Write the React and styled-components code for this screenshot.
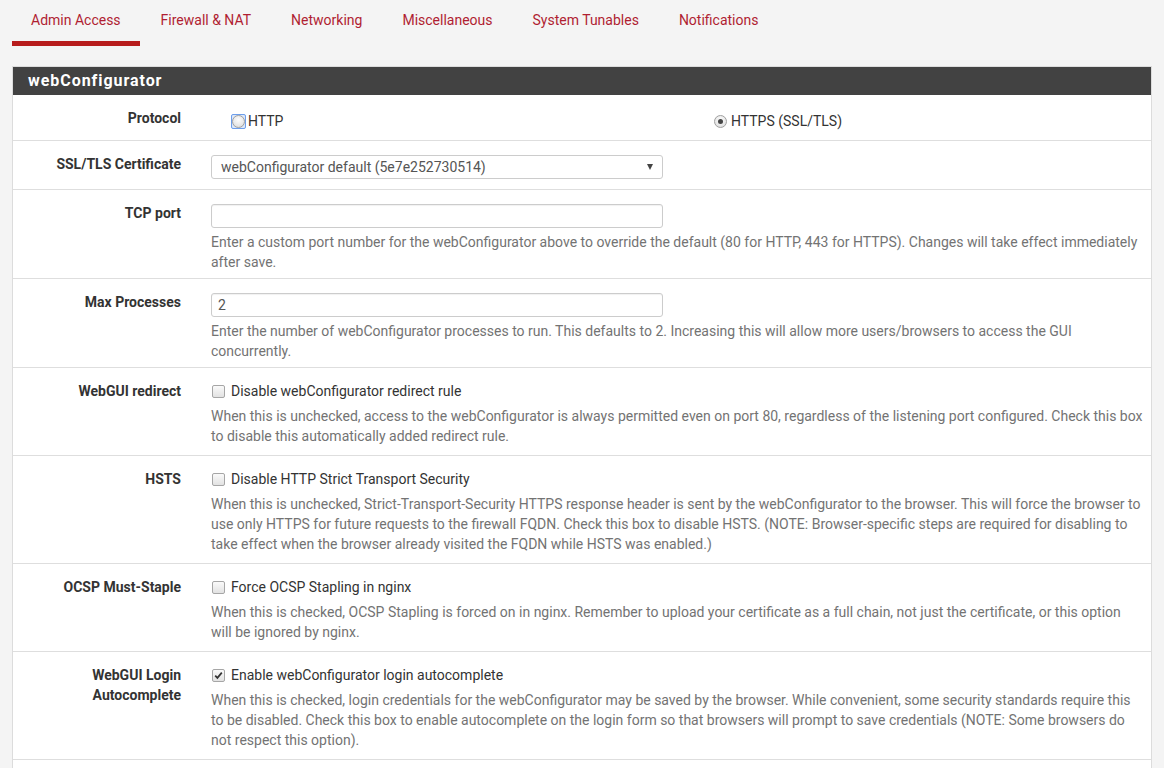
import React from "react";
import styled, { createGlobalStyle } from "styled-components";

const Global = createGlobalStyle`
  html, body { margin: 0; padding: 0; overflow: hidden; }
  body {
    background: #f4f4f4;
    font-family: Roboto, "Liberation Sans", Arial, sans-serif;
    font-size: 14px;
    color: #333;
  }
`;

const Page = styled.div`
  width: 1164px;
`;

const Tabs = styled.nav`
  display: flex;
  padding-left: 12px;
`;

const Tab = styled.a`
  display: block;
  padding: 10px 19px 11px 19px;
  line-height: 20px;
  font-size: 14px;
  color: #b01e32;
  text-decoration: none;
  border-bottom: 5px solid ${(p) => (p.$active ? "#b71c1c" : "transparent")};
  margin-right: 2px;
`;

const Panel = styled.section`
  margin: 20px 12px 0 12px;
  padding-bottom: 40px;
  background: #fff;
  border: 1px solid #dcdcdc;
`;

const PanelHeading = styled.h2`
  margin: 0;
  background: #424242;
  color: #fff;
  font-size: 16px;
  font-weight: 700;
  letter-spacing: 0.95px;
  line-height: 28px;
  padding: 0 15px;
`;

const Row = styled.div`
  display: grid;
  grid-template-columns: 183px 1fr;
  padding: 13px 0 ${(p) => p.$pb ?? 9}px 0;
  border-bottom: 1px solid #dedede;
`;

const Label = styled.div`
  padding: 0 15px;
  text-align: right;
  font-weight: 700;
  line-height: 20px;
  color: #333;
`;

const Content = styled.div`
  padding: 0 8px 0 15px;
  min-width: 0;
`;

const Help = styled.div`
  margin-top: ${(p) => p.$mt ?? 5}px;
  line-height: 20px;
  color: #737373;
`;

const Field = styled.div`
  box-sizing: border-box;
  width: 452px;
  height: 24px;
  margin-top: 1px;
  border: 1px solid #cccccc;
  border-radius: 3px;
  background: #fff;
  box-shadow: inset 0 1px 1px rgba(0, 0, 0, 0.06);
  padding: 0 9px 0 6px;
  line-height: 22px;
  color: #555;
  display: flex;
  align-items: center;
`;

const SelectBox = styled(Field)`
  padding-left: 9px;
  justify-content: space-between;
  box-shadow: none;
`;

const Caret = styled.span`
  width: 0;
  height: 0;
  border-left: 3.5px solid transparent;
  border-right: 3.5px solid transparent;
  border-top: 6px solid #444;
`;

const RadioGroup = styled.div`
  display: grid;
  grid-template-columns: 482px 1fr;
  margin: 3px 0 0 20px;
`;

const Choice = styled.label`
  display: flex;
  align-items: center;
  line-height: 20px;
  color: #333;
`;

const RadioWrap = styled.span`
  box-sizing: border-box;
  width: 15px;
  height: 15px;
  display: inline-flex;
  align-items: center;
  justify-content: center;
  border: 1px solid ${(p) => (p.$focus ? "#6d9eeb" : "transparent")};
  border-radius: 2px;
  margin-right: ${(p) => (p.$focus ? 2 : 3)}px;
  background: ${(p) => (p.$focus ? "#dce8fb" : "transparent")};
`;

const RadioDot = styled.span`
  box-sizing: border-box;
  width: 13px;
  height: 13px;
  border-radius: 50%;
  border: 1px solid #a0a0a0;
  background: radial-gradient(circle at 50% 35%, #fdfdfd 0%, #e4e4e4 70%, #d2d2d2 100%);
  display: inline-flex;
  align-items: center;
  justify-content: center;
  &::after {
    content: "";
    width: 5px;
    height: 5px;
    border-radius: 50%;
    background: ${(p) => (p.$checked ? "#444" : "transparent")};
  }
`;

const CheckLine = styled.label`
  display: flex;
  align-items: center;
  line-height: 20px;
  color: #333;
`;

const Box = styled.span`
  box-sizing: border-box;
  width: 13px;
  height: 13px;
  margin: 0 6px 0 1px;
  border: 1px solid #a6a6a6;
  border-radius: 2px;
  background: linear-gradient(#fafafa, #e2e2e2);
  display: inline-flex;
  align-items: center;
  justify-content: center;
`;

function Check({ checked }) {
  return (
    <Box>
      {checked && (
        <svg width="9" height="9" viewBox="0 0 9 9">
          <path d="M1.2 4.6 L3.4 6.9 L7.8 1.6" fill="none" stroke="#333" strokeWidth="1.7" />
        </svg>
      )}
    </Box>
  );
}

const tabs = [
  "Admin Access",
  "Firewall & NAT",
  "Networking",
  "Miscellaneous",
  "System Tunables",
  "Notifications",
];

export default function App() {
  return (
    <Page>
      <Global />
      <Tabs>
        {tabs.map((t, i) => (
          <Tab key={t} $active={i === 0} href="#">
            {t}
          </Tab>
        ))}
      </Tabs>
      <Panel>
        <PanelHeading>webConfigurator</PanelHeading>

        <Row $pb={9}>
          <Label>Protocol</Label>
          <Content>
            <RadioGroup>
              <Choice>
                <RadioWrap $focus>
                  <RadioDot />
                </RadioWrap>
                HTTP
              </Choice>
              <Choice>
                <RadioWrap>
                  <RadioDot $checked />
                </RadioWrap>
                HTTPS (SSL/TLS)
              </Choice>
            </RadioGroup>
          </Content>
        </Row>

        <Row $pb={10}>
          <Label>SSL/TLS Certificate</Label>
          <Content>
            <SelectBox>
              <span>webConfigurator default (5e7e252730514)</span>
              <Caret />
            </SelectBox>
          </Content>
        </Row>

        <Row $pb={6}>
          <Label>TCP port</Label>
          <Content>
            <Field />
            <Help $mt={4}>
              Enter a custom port number for the webConfigurator above to override the default (80 for
              HTTP, 443 for HTTPS). Changes will take effect immediately after save.
            </Help>
          </Content>
        </Row>

        <Row $pb={6}>
          <Label>Max Processes</Label>
          <Content>
            <Field>2</Field>
            <Help $mt={4}>
              Enter the number of webConfigurator processes to run. This defaults to 2. Increasing this
              will allow more users/browsers to access the GUI concurrently.
            </Help>
          </Content>
        </Row>

        <Row>
          <Label>WebGUI redirect</Label>
          <Content>
            <CheckLine>
              <Check />
              Disable webConfigurator redirect rule
            </CheckLine>
            <Help>
              When this is unchecked, access to the webConfigurator is always permitted even on port 80,
              regardless of the listening port configured. Check this box to disable this automatically
              added redirect rule.
            </Help>
          </Content>
        </Row>

        <Row>
          <Label>HSTS</Label>
          <Content>
            <CheckLine>
              <Check />
              Disable HTTP Strict Transport Security
            </CheckLine>
            <Help>
              When this is unchecked, Strict-Transport-Security HTTPS response header is sent by the
              webConfigurator to the browser. This will force the browser to use only HTTPS for future
              requests to the firewall FQDN. Check this box to disable HSTS. (NOTE: Browser-specific steps
              are required for disabling to take effect when the browser already visited the FQDN while
              HSTS was enabled.)
            </Help>
          </Content>
        </Row>

        <Row>
          <Label>OCSP Must-Staple</Label>
          <Content>
            <CheckLine>
              <Check />
              Force OCSP Stapling in nginx
            </CheckLine>
            <Help>
              When this is checked, OCSP Stapling is forced on in nginx. Remember to upload your
              certificate as a full chain, not just the certificate, or this option will be ignored by
              nginx.
            </Help>
          </Content>
        </Row>

        <Row>
          <Label>WebGUI Login Autocomplete</Label>
          <Content>
            <CheckLine>
              <Check checked />
              Enable webConfigurator login autocomplete
            </CheckLine>
            <Help>
              When this is checked, login credentials for the webConfigurator may be saved by the browser.
              While convenient, some security standards require this to be disabled. Check this box to
              enable autocomplete on the login form so that browsers will prompt to save credentials
              (NOTE: Some browsers do not respect this option).
            </Help>
          </Content>
        </Row>
      </Panel>
    </Page>
  );
}
